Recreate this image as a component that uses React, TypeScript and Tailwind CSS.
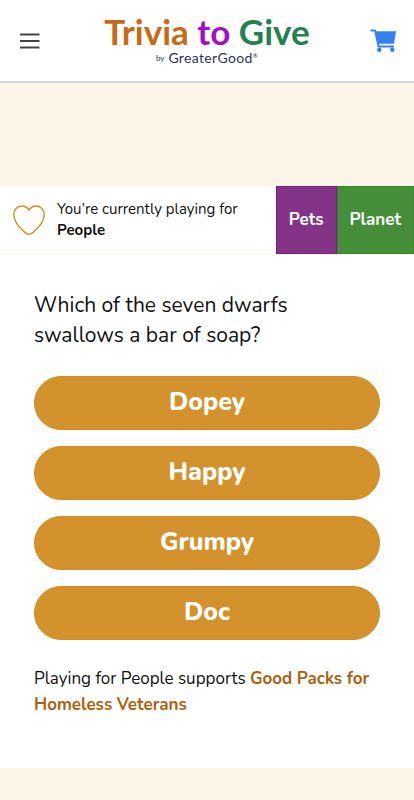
const answers = ["Dopey", "Happy", "Grumpy", "Doc"];

function MenuIcon() {
  return (
    <svg viewBox="0 0 20 16" className="h-4 w-5" stroke="#444" strokeWidth="1.8" aria-hidden="true">
      <path d="M0 1.5h19.5M0 8h19.5M0 14.5h19.5" />
    </svg>
  );
}

function HeartIcon() {
  return (
    <svg
      viewBox="0 0 32 30"
      className="h-[30px] w-8 shrink-0"
      fill="none"
      stroke="#d68a1c"
      strokeWidth="1.4"
      strokeLinejoin="round"
      aria-hidden="true"
    >
      <path d="M16 5.2C14.4 2.4 11.8 1 9 1C4.300 1 .8 4.700 .8 9.500C.8 16.500 6 22.500 12.200 27.600C14.600 29.500 17.400 29.500 19.800 27.600C26 22.500 31.200 16.500 31.200 9.500C31.200 4.700 27.700 1 23 1C20.200 1 17.600 2.400 16 5.200Z" />
    </svg>
  );
}

function CartIcon() {
  return (
    <svg viewBox="0 0 26 26" className="size-[26px]" fill="currentColor" aria-hidden="true">
      <path d="M5.500 3.200H26L24 15.800H8.200Z" />
      <path d="M.5 2.400H5L8.600 18.600H24" fill="none" stroke="currentColor" strokeWidth="2" strokeLinejoin="round" />
      <circle cx="9.300" cy="21.800" r="2.200" />
      <circle cx="22.300" cy="21.800" r="2.200" />
    </svg>
  );
}

function Header() {
  return (
    <header className="flex h-[83px] items-start justify-between border-b-2 border-[#d3d6d9] bg-white px-4">
      <button type="button" aria-label="Menu" className="mt-[33px] w-7 pl-1">
        <MenuIcon />
      </button>
      <a href="#home" className="flex flex-col items-center pt-2.5 font-[Lato,sans-serif]">
        <span className="text-[35px] leading-[42px] font-bold whitespace-nowrap">
          <span className="text-[#c56a17]">Trivia</span> <span className="text-[#a30fc4]">to</span>{" "}
          <span className="text-[#22814f]">Give</span>
        </span>
        <span className="flex items-center gap-1 leading-3 text-[#2d3358]">
          <span className="text-[8px] leading-3">by</span>
          <span className="flex text-sm leading-3 tracking-wide">
            GreaterGood<span className="text-[6px] leading-2">®</span>
          </span>
        </span>
      </a>
      <button type="button" aria-label="Shopping cart" className="mt-7 w-7 text-[#3380ef]">
        <CartIcon />
      </button>
    </header>
  );
}

export default function App() {
  return (
    <div className="min-h-screen bg-[#fdf5e8] font-['Nunito','Open_Sans',sans-serif] text-[#111]">
      <Header />
      <div className="h-[103px]" />
      <section className="flex h-[68px] bg-white">
        <div className="flex flex-1 items-center gap-3 pl-[13px]">
          <HeartIcon />
          <p className="text-[15px] leading-[21px]">
            You’re currently playing for
            <br />
            <strong>People</strong>
          </p>
        </div>
        <button type="button" className="border border-[#7c1b84] bg-[#833487] px-3 text-[17px] font-bold text-white">
          Pets
        </button>
        <button type="button" className="border border-[#338a27] bg-[#468e39] px-3 text-[17px] font-bold text-white">
          Planet
        </button>
      </section>
      <main className="mt-px bg-white px-[34px] pt-[35px] pb-[50px]">
        <h1 className="text-[21px] leading-[30px]">Which of the seven dwarfs swallows a bar of soap?</h1>
        <div className="mt-[26px] flex flex-col gap-4">
          {answers.map((answer) => (
            <button
              key={answer}
              type="button"
              className="h-[54px] rounded-full border border-[#d08c20] bg-[#d3922b] text-[25px] font-extrabold text-white"
            >
              {answer}
            </button>
          ))}
        </div>
        <p className="mt-[26px] text-[17px] leading-[26px]">
          Playing for People supports{" "}
          <a href="#veterans" className="font-bold text-[#a9620f]">
            Good Packs for Homeless Veterans
          </a>
        </p>
      </main>
    </div>
  );
}
